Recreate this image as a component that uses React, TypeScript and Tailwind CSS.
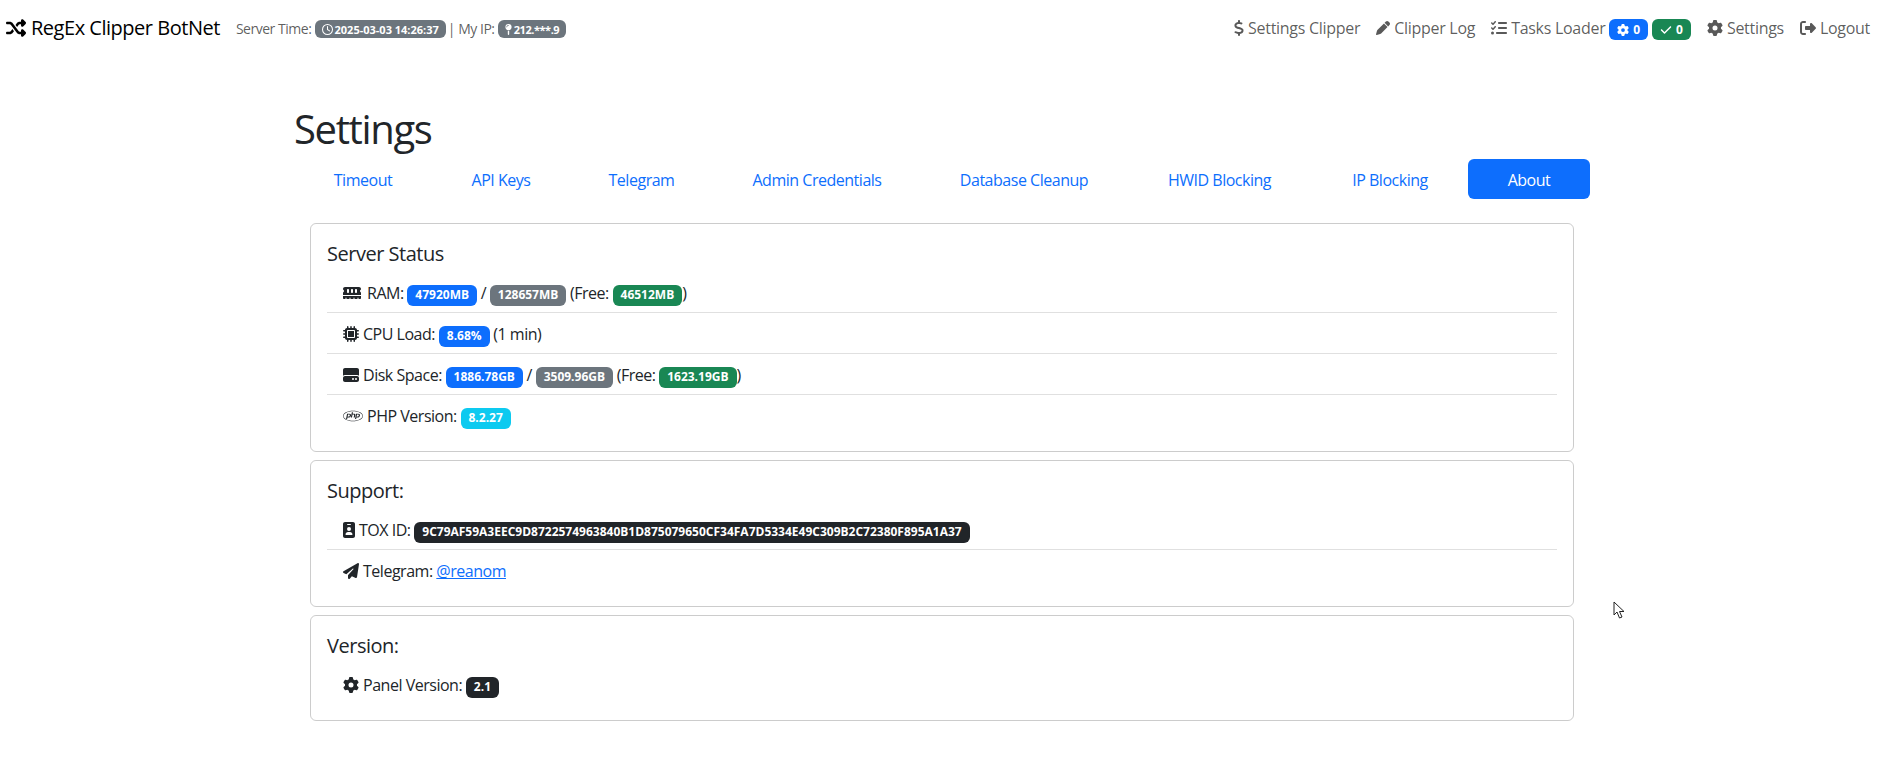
import React from 'react';
import {
  FaShuffle, FaRegClock, FaMapPin, FaDollarSign, FaPen, FaListCheck, FaGear, FaCheck,
  FaRightFromBracket, FaMemory, FaMicrochip, FaHardDrive, FaPhp, FaIdBadge, FaPaperPlane,
} from 'react-icons/fa6';

const tabs = [
  { label: 'Timeout', width: 'w-[138px]' },
  { label: 'API Keys', width: 'w-[138px]' },
  { label: 'Telegram', width: 'w-[143px]' },
  { label: 'Admin Credentials', width: 'w-[208px]' },
  { label: 'Database Cleanup', width: 'w-[206px]' },
  { label: 'HWID Blocking', width: 'w-[185px]' },
  { label: 'IP Blocking', width: 'w-[156px]' },
  { label: 'About', width: 'w-[122px]' },
];

const Badge = ({ color, small, children }: { color: string; small?: boolean; children: React.ReactNode }) => (
  <span className={`inline-block rounded-[6px] font-bold text-white align-baseline whitespace-nowrap leading-none tracking-normal ${color} ${small ? 'text-[11px] px-[7px] py-[3.5px]' : 'text-[12px] px-[8px] py-[4.5px]'}`}>
    {children}
  </span>
);

const NavLink = ({ icon, children }: { icon: React.ReactNode; children: React.ReactNode }) => (
  <a className="flex items-center gap-1 px-2 py-2 text-black/65 whitespace-nowrap tracking-[-0.018em]">
    {icon}
    <span>{children}</span>
  </a>
);

const Item = ({ last, children }: { last?: boolean; children: React.ReactNode }) => (
  <div className={`px-4 pt-[9px] pb-[7px] leading-6 text-[#212529] ${last ? 'h-[40px]' : 'h-[41px] border-b border-black/12'}`}>
    {children}
  </div>
);

const Card = ({ title, children }: { title: string; children: React.ReactNode }) => (
  <div className="border border-black/20 rounded-[6px] p-4 mb-2">
    <h5 className="text-[20px] leading-6 mb-2 pt-[2px] h-[24px] text-[#212529]">{title}</h5>
    {children}
  </div>
);

const App: React.FC = () => {
  return (
    <div className="min-h-[776px] bg-white text-[16px] tracking-[-0.03em]" style={{ fontFamily: '"Open Sans", sans-serif' }}>
      <nav className="flex items-center justify-between h-[56px] pl-[6px] pr-1">
        <div className="flex items-center">
          <div className="flex items-center gap-[5px] text-[20px] text-black mr-4">
            <FaShuffle className="w-[20px] h-[20px]" />
            <span>RegEx Clipper BotNet</span>
          </div>
          <div className="text-[14px] text-black/65">
            Server Time:{' '}
            <Badge color="bg-[#6c757d]" small><FaRegClock className="inline w-[11px] h-[11px] mr-[2px] align-[-1px]" />2025-03-03 14:26:37</Badge>
            <span className="ml-[2px]">| My IP:</span>{' '}
            <Badge color="bg-[#6c757d]" small><FaMapPin className="inline w-[7px] h-[11px] mr-[2px] align-[-1px]" /><span className="tracking-[-0.04em]">212.***.9</span></Badge>
          </div>
        </div>
        <div className="flex items-center">
          <NavLink icon={<FaDollarSign className="w-[10px] h-[16px]" />}>Settings Clipper</NavLink>
          <NavLink icon={<FaPen className="w-[14px] h-[14px]" />}>Clipper Log</NavLink>
          <NavLink icon={<FaListCheck className="w-[16px] h-[16px]" />}>
            Tasks Loader{' '}
            <Badge color="bg-[#0d6efd]"><FaGear className="inline w-[12px] h-[12px] mr-[4px] align-[-2px]" />0</Badge>{' '}
            <Badge color="bg-[#198754]"><FaCheck className="inline w-[12px] h-[12px] mr-[4px] align-[-2px]" />0</Badge>
          </NavLink>
          <NavLink icon={<FaGear className="w-[16px] h-[16px]" />}>Settings</NavLink>
          <NavLink icon={<FaRightFromBracket className="w-[16px] h-[16px]" />}>Logout</NavLink>
        </div>
      </nav>

      <main className="w-[1296px] ml-[294px] pt-[49px]">
        <h1 className="text-[40px] leading-[48px] mb-[6px] text-[#212529] tracking-[-0.034em]">Settings</h1>
        <div className="flex">
          {tabs.map((t) => (
            <a
              key={t.label}
              className={`shrink-0 text-center h-[40px] leading-[43px] rounded-[6px] ${t.width} ${t.label === 'About' ? 'bg-[#0d6efd] text-white' : 'text-[#0d6efd]'}`}
            >
              {t.label}
            </a>
          ))}
        </div>

        <div className="p-4 pt-[24px]">
          <Card title="Server Status">
            <Item>
              <FaMemory className="inline w-[18px] h-[16px] mr-[6px] align-[-2px]" />RAM:{' '}
              <Badge color="bg-[#0d6efd]">47920MB</Badge> / <Badge color="bg-[#6c757d]">128657MB</Badge> (Free: <Badge color="bg-[#198754]">46512MB</Badge>)
            </Item>
            <Item>
              <FaMicrochip className="inline w-[16px] h-[16px] mr-1 align-[-2px]" />CPU Load:{' '}
              <Badge color="bg-[#0d6efd]">8.68%</Badge> (1 min)
            </Item>
            <Item>
              <FaHardDrive className="inline w-[16px] h-[16px] mr-1 align-[-2px]" />Disk Space:{' '}
              <Badge color="bg-[#0d6efd]">1886.78GB</Badge> / <Badge color="bg-[#6c757d]">3509.96GB</Badge> (Free: <Badge color="bg-[#198754]">1623.19GB</Badge>)
            </Item>
            <Item last>
              <FaPhp className="inline w-[20px] h-[16px] mr-1 align-[-2px]" />PHP Version:{' '}
              <Badge color="bg-[#0dcaf0]">8.2.27</Badge>
            </Item>
          </Card>
          <Card title="Support:">
            <Item>
              <FaIdBadge className="inline w-[12px] h-[16px] mr-1 align-[-2px]" />TOX ID:{' '}
              <Badge color="bg-[#212529]">9C79AF59A3EEC9D8722574963840B1D875079650CF34FA7D5334E49C309B2C72380F895A1A37</Badge>
            </Item>
            <Item last>
              <FaPaperPlane className="inline w-[16px] h-[16px] mr-1 align-[-2px]" />Telegram:{' '}
              <a className="text-[#0d6efd] underline">@reanom</a>
            </Item>
          </Card>
          <Card title="Version:">
            <Item last>
              <FaGear className="inline w-[16px] h-[16px] mr-1 align-[-2px]" />Panel Version:{' '}
              <Badge color="bg-[#212529]">2.1</Badge>
            </Item>
          </Card>
        </div>
      </main>

      {/* mouse pointer caught in the shot */}
      <svg className="absolute left-[1613px] top-[601px]" width="13" height="19" viewBox="0 0 13 19">
        <path d="M1 1 L1 14 L4 11 L6.5 17 L9 16 L6.5 10.5 L11 10.5 Z" fill="#fff" stroke="#222" strokeWidth="1" />
      </svg>
    </div>
  );
};

export default App;
